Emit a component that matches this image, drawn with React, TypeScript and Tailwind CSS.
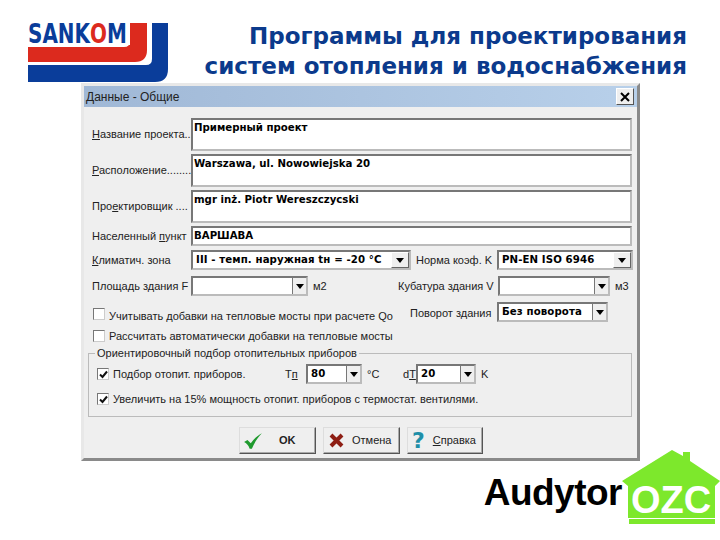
import type { ReactNode } from "react";

const sans = "font-['Liberation_Sans',sans-serif] text-[11px] text-[#222]";
const bold = "font-['DejaVu_Sans',sans-serif] font-bold text-[10.2px] text-black";
const sunken = "border-2 border-t-[#777] border-l-[#777] border-r-[#bbb] border-b-[#bbb] bg-white";

function U({ children }: { children: ReactNode }) {
  return <span className="underline underline-offset-1">{children}</span>;
}

function SankomLogo() {
  return (
    <svg width="141" height="60" viewBox="0 0 141 60" className="shrink-0">
      <path d="M124 0h16v46q0 13-13 13H0V42h118q6 0 6-6z" fill="#0a3d9a" />
      <path d="M102 0h17v27q0 12-12 12H0V24h96q6 0 6-6z" fill="#dc2a1e" />
      <rect x="0" y="0" width="102" height="22" fill="#fff" />
      <text transform="scale(0.74 1)" x="0" y="20" fontFamily="'DejaVu Sans', sans-serif" fontWeight="700" fontSize="27" fill="#0a3d9a">
        SANK<tspan fill="#dc2a1e">O</tspan>M
      </text>
    </svg>
  );
}

function HouseLogo() {
  return (
    <svg width="98" height="76" viewBox="0 0 98 76" className="shrink-0">
      <path d="M0 31 50 0l11 6V2h7v9l30 20-5 5v32H6V36z" fill="#7de82c" />
      <rect x="7" y="69" width="86" height="5" fill="#7de82c" />
      <text x="9" y="63" fontFamily="'Liberation Sans', sans-serif" fontWeight="700" fontSize="38" fill="#fff">OZC</text>
    </svg>
  );
}

function TextBox({ label, value, tall }: { label: ReactNode; value: string; tall?: boolean }) {
  return (
    <div className="flex items-center">
      <div className={`w-[99px] shrink-0 whitespace-nowrap ${sans}`}>{label}</div>
      <div className={`w-[441px] px-[1px] pt-[1px] leading-[13px] ${tall ? "h-[33px]" : "h-[20px]"} ${sunken} ${bold}`}>{value}</div>
    </div>
  );
}

function Combo({ value, className, raised }: { value?: string; className: string; raised?: boolean }) {
  return (
    <div className={`flex h-[20px] shrink-0 items-stretch ${sunken} ${className}`}>
      <div className={`flex-1 overflow-hidden whitespace-nowrap pl-[3px] leading-[15px] tracking-[0.1px] ${bold}`}>{value}</div>
      <div
        className={`flex shrink-0 items-center justify-center ${
          raised
            ? "w-[18px] border border-t-white border-l-white border-r-[#666] border-b-[#666] bg-[#efefef]"
            : "w-[14px] border-l border-[#777] bg-[#efefef]"
        }`}
      >
        <div className="h-0 w-0 border-x-[4px] border-t-[5px] border-x-transparent border-t-black" />
      </div>
    </div>
  );
}

function Check({ checked }: { checked?: boolean }) {
  return (
    <div className="flex h-[12px] w-[12px] shrink-0 items-center justify-center border border-t-[#777] border-l-[#777] border-r-[#ccc] border-b-[#ccc] bg-white">
      {checked && (
        <svg width="9" height="9" viewBox="0 0 9 9">
          <path d="M1 4.5 3.5 7 8 1.5" fill="none" stroke="#111" strokeWidth="2" />
        </svg>
      )}
    </div>
  );
}

function Button({ icon, children, className }: { icon: ReactNode; children: ReactNode; className: string }) {
  return (
    <div className={`flex h-[27px] items-center border border-t-[#ddd] border-l-[#ddd] border-r-[#555] border-b-[#555] bg-[#efefef] shadow-[inset_-1px_-1px_0_#aaa] ${className}`}>
      {icon}
      {children}
    </div>
  );
}

export default function App() {
  return (
    <div className="h-[540px] w-[720px] overflow-hidden bg-white">
      <div className="relative flex h-[83px] pl-[28px] pt-[23px]">
        <SankomLogo />
        <h1 className="absolute right-[33px] top-[21px] whitespace-nowrap text-right font-['DejaVu_Sans',sans-serif] text-[23px] font-bold leading-[30px] text-[#0b3a8c]">
          Программы для проектирования
          <br />
          систем отопления и водоснабжения
        </h1>
      </div>

      <div className="ml-[81px] h-[378px] w-[559px] border-[3px] border-t-[#e8e8e8] border-l-[#e8e8e8] border-r-[#8a8a8a] border-b-[#8a8a8a] bg-[#efefef]">
        <div className="flex h-[21px] items-center justify-between bg-gradient-to-r from-[#a0b8d6] to-[#b8d0ea] pl-[2px] pr-[3px]">
          <span className="font-['Liberation_Sans',sans-serif] text-[12px] text-[#222]">Данные - Общие</span>
          <div className="flex h-[17px] w-[18px] items-center justify-center border border-t-white border-l-white border-r-[#555] border-b-[#555] bg-[#efefef]">
            <svg width="10" height="10" viewBox="0 0 10 10">
              <path d="M1 1l8 8M9 1l-8 8" stroke="#000" strokeWidth="2" />
            </svg>
          </div>
        </div>

        <div className="flex flex-col pl-[8px] pt-[11px]">
          <div className="flex flex-col gap-[3px]">
            <TextBox tall label={<><U>Н</U>азвание проекта..</>} value="Примерный проект" />
            <TextBox tall label={<><U>Р</U>асположение........</>} value="Warszawa, ul. Nowowiejska 20" />
            <TextBox tall label={<>Про<U>е</U>ктировщик ....</>} value="mgr inż. Piotr Wereszczycski" />
            <TextBox label={<>Населенный <U>п</U>ункт</>} value="ВАРШАВА" />
          </div>

          <div className={`mt-[4px] flex h-[20px] items-center ${sans}`}>
            <span className="w-[99px] shrink-0"><U>К</U>лиматич. зона</span>
            <Combo raised className="w-[220px]" value="III - темп. наружная tн = -20 °C" />
            <span className="ml-[5px] w-[81px] shrink-0 whitespace-nowrap">Норма коэф. K</span>
            <Combo raised className="w-[136px]" value="PN-EN ISO 6946" />
          </div>

          <div className={`mt-[6px] flex h-[20px] items-center ${sans}`}>
            <span className="w-[99px] shrink-0">Площадь здания F</span>
            <Combo className="w-[117px]" />
            <span className="ml-[5px] w-[85px] shrink-0">м2</span>
            <span className="w-[100px] shrink-0 whitespace-nowrap">Кубатура здания V</span>
            <Combo className="w-[112px]" />
            <span className="ml-[5px]">м3</span>
          </div>

          <div className={`mt-[6px] flex h-[20px] ${sans}`}>
            <div className="ml-[1px] mr-[4px] mt-[6px]"><Check /></div>
            <span className="mt-[6px] w-[301px] shrink-0 whitespace-nowrap">Учитывать добавки на тепловые мосты при расчете Qo</span>
            <span className="mt-[3px] w-[87px] shrink-0 whitespace-nowrap">Поворот здания</span>
            <Combo className="w-[111px]" value="Без поворота" />
          </div>

          <div className={`mt-[8px] flex h-[12px] items-center ${sans}`}>
            <div className="ml-[1px] mr-[4px]"><Check /></div>
            <span className="whitespace-nowrap">Рассчитать автоматически добавки на тепловые мосты</span>
          </div>

          <div className={`relative ml-[-4px] mt-[11px] h-[64px] w-[544px] border border-[#bbb] ${sans}`}>
            <span className="absolute left-[6px] top-[-7px] bg-[#efefef] px-[2px] leading-[13px]">Ориентировочный подбор отопительных приборов</span>
            <div className="mt-[10px] flex h-[20px] items-center pl-[8px]">
              <Check checked />
              <span className="ml-[4px] w-[172px] shrink-0">Подбор отопит. приборов.</span>
              <span className="w-[21px] shrink-0">T<U>п</U></span>
              <Combo className="w-[56px]" value="80" />
              <span className="ml-[5px] w-[36px] shrink-0">°C</span>
              <span className="w-[13px] shrink-0">d<U>T</U></span>
              <Combo className="w-[60px]" value="20" />
              <span className="ml-[5px]">K</span>
            </div>
            <div className="mt-[8px] flex h-[14px] items-center pl-[8px]">
              <Check checked />
              <span className="ml-[4px] whitespace-nowrap">Увеличить на 15% мощность отопит. приборов с термостат. вентилями.</span>
            </div>
          </div>

          <div className={`ml-[147px] mt-[10px] flex gap-[7px] ${sans}`}>
            <Button
              className="w-[77px] pl-[3px]"
              icon={
                <svg width="20" height="18" viewBox="0 0 18 16">
                  <path d="M1 9l3-2 3 3c3-4 6-7 10-9-4 4-7 9-9 14H6C5 12 3 10 1 9z" fill="#1f9a2e" />
                </svg>
              }
            >
              <span className="ml-[16px] font-bold">OK</span>
            </Button>
            <Button
              className="w-[77px] pl-[5px]"
              icon={
                <svg width="15" height="15" viewBox="0 0 15 15">
                  <path d="M2 2l11 11M13 2L2 13" stroke="#8e1e14" strokeWidth="4" />
                </svg>
              }
            >
              <span className="ml-[8px]">Отмена</span>
            </Button>
            <Button
              className="w-[76px] pl-[4px]"
              icon={<span className="font-['DejaVu_Sans',sans-serif] text-[22px] font-bold leading-none text-[#1f8fa8]">?</span>}
            >
              <span className="ml-[8px]"><U>С</U>правка</span>
            </Button>
          </div>
        </div>
      </div>

      <div className="-mt-[11px] flex items-end justify-end">
        <span className="mb-[9px] font-['Liberation_Sans',sans-serif] text-[37px] font-bold leading-[48px] tracking-[-0.5px] text-black">Audytor</span>
        <HouseLogo />
      </div>
    </div>
  );
}
